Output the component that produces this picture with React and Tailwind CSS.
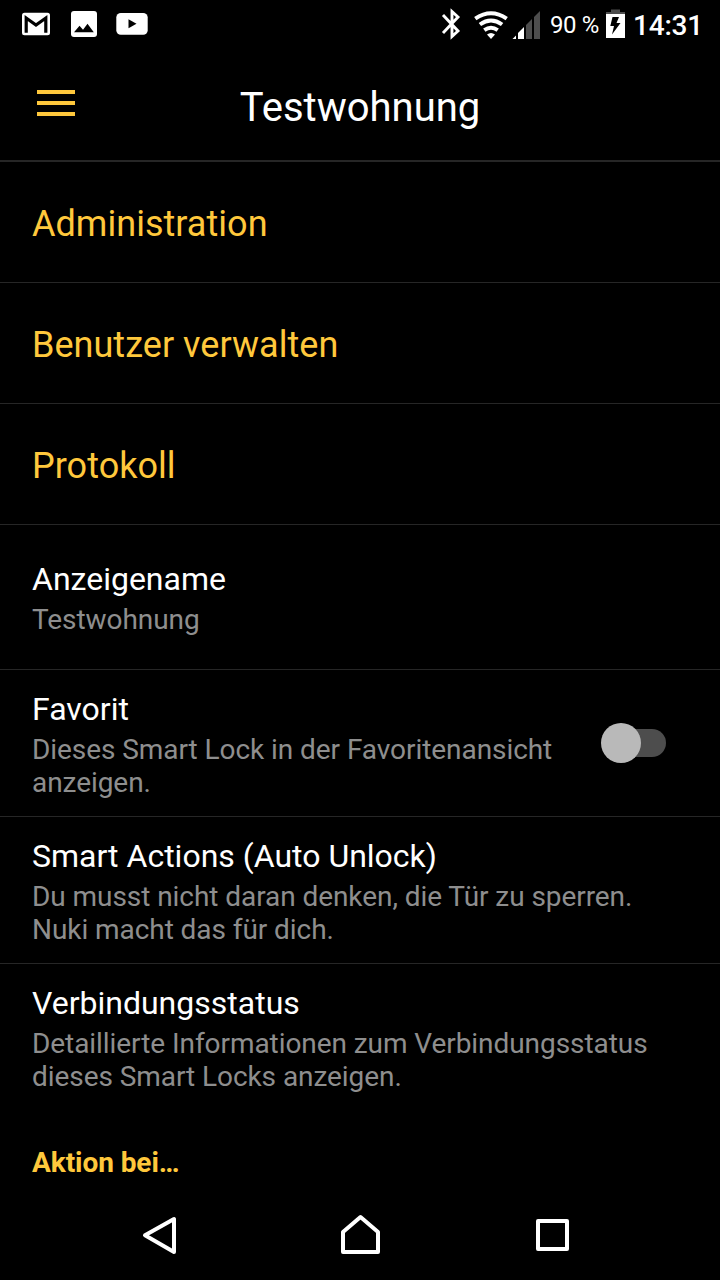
import React, { useState } from "react";

const links = ["Administration", "Benutzer verwalten", "Protokoll"];

function StatusBar() {
  return (
    <div className="h-12 shrink-0 flex items-center justify-between pl-[22px] pr-[17px]">
      <svg width="126" height="48" viewBox="22 0 126 48">
        {/* Mail */}
        <rect x="22" y="12.7" width="28" height="22.6" rx="2.5" fill="#fff" />
        <path d="M26.2 32.7V18L36 25L45.8 18V32.7" fill="none" stroke="#000" strokeWidth="3.2" />
        {/* Gallery */}
        <rect x="71" y="11" width="26" height="26" rx="3" fill="#fff" />
        <path d="M74 32.3L79.5 25.7L83 29.7L87.5 23.7L93.8 32.3Z" fill="#000" />
        {/* Video */}
        <rect x="116.3" y="13" width="31.4" height="21.7" rx="4.5" fill="#fff" />
        <path d="M128.5 19.3V28.2L136.5 23.7Z" fill="#000" />
      </svg>

      <div className="flex items-center h-12">
        <svg width="100" height="48" viewBox="441 0 100 48">
          {/* Bluetooth */}
          <path
            d="M443 15L458 31L452 36.5V11.5L458 17L443 33"
            fill="none"
            stroke="#fff"
            strokeWidth="2.9"
          />
          {/* Wifi */}
          <g fill="none" stroke="#fff" strokeWidth="4">
            <path d="M475.3 18.6Q491 7.8 506.7 18.6" />
            <path d="M479.9 24.5Q491 16.5 502.1 24.5" />
            <path d="M484.3 30.2Q491 25.4 497.7 30.2" />
          </g>
          <path d="M487 34.6Q491 31.4 495 34.6L491 39Z" fill="#fff" />
          {/* Signal */}
          <path d="M512.5 39L516 35.5V39Z" fill="#fff" />
          <path d="M518 39V33L524 27V39Z" fill="#fff" />
          <path d="M526 39V25L532 19V39Z" fill="#4d4d4d" />
          <path d="M534 39V17L540 11V39Z" fill="#4d4d4d" />
        </svg>
        <span className="w-[49px] ml-[9px] pt-0.5 text-2xl tracking-[-0.4px] whitespace-nowrap">90 %</span>
        <svg className="ml-[7px]" width="19" height="48" viewBox="606 0 19 48">
          <path d="M606 14V12H611V9.5H620V12H625V14Z" fill="#4d4d4d" />
          <rect x="606" y="14" width="19" height="24" fill="#fff" />
          <path d="M612.5 17H619L616.5 23H620.5L612 34.5L614 26H610.3Z" fill="#000" />
        </svg>
        <span className="w-[70px] ml-2 pt-[3px] text-[28px] font-medium tracking-[-0.2px] whitespace-nowrap">14:31</span>
      </div>
    </div>
  );
}

function Row({ title, lines, className, children }) {
  return (
    <div className={`flex justify-between border-b border-[#262626] pl-8 ${className}`}>
      <div>
        <div className="text-[32px] leading-[38px]">{title}</div>
        <div className="mt-[5px] text-[28px] leading-[33px] tracking-[-0.065px] text-[#8e8e8e]">
          {lines.map((line) => (
            <div key={line} className="whitespace-nowrap">
              {line}
            </div>
          ))}
        </div>
      </div>
      {children}
    </div>
  );
}

export default function App() {
  const [favorite, setFavorite] = useState(false);

  return (
    <div className="w-[720px] h-[1280px] flex flex-col bg-black text-white overflow-hidden font-[Roboto,sans-serif]">
      <StatusBar />

      <header className="h-[114px] shrink-0 grid grid-cols-[1fr_auto_1fr] items-center border-b-2 border-[#262626]">
        <button className="w-[38px] ml-[37px] -mt-[2px] flex flex-col gap-[7px]">
          <span className="h-1 w-full bg-[#ffc83c]"></span>
          <span className="h-1 w-full bg-[#ffc83c]"></span>
          <span className="h-1 w-full bg-[#ffc83c]"></span>
        </button>
        <h1 className="text-[40px] leading-[48px] mt-[7px]">Testwohnung</h1>
      </header>

      <main className="flex-1">
        {links.map((label) => (
          <div
            key={label}
            className="h-[121px] flex items-center border-b border-[#262626] pl-8 pt-1 text-4xl tracking-[0.03px] text-[#ffc83c]"
          >
            {label}
          </div>
        ))}

        <Row className="h-[145px] pt-[35px]" title="Anzeigename" lines={["Testwohnung"]} />
        <Row
          className="h-[147px] pt-5"
          title="Favorit"
          lines={["Dieses Smart Lock in der Favoritenansicht", "anzeigen."]}
        >
          <button
            onClick={() => setFavorite(!favorite)}
            className={`w-[65px] h-10 mt-[33px] mr-[54px] flex items-center ${
              favorite ? "flex-row-reverse" : ""
            }`}
          >
            <span className="size-10 shrink-0 relative z-10 rounded-full bg-[#b9b9b9]"></span>
            <span className="h-7 w-[45px] -mx-5 shrink-0 rounded-full bg-[#4d4d4d]"></span>
          </button>
        </Row>
        <Row
          className="h-[147px] pt-5"
          title="Smart Actions (Auto Unlock)"
          lines={["Du musst nicht daran denken, die Tür zu sperren.", "Nuki macht das für dich."]}
        />
        <Row
          className="h-[147px] pt-5 border-b-transparent"
          title="Verbindungsstatus"
          lines={["Detaillierte Informationen zum Verbindungsstatus", "dieses Smart Locks anzeigen."]}
        />
        <h2 className="pl-8 pt-[35px] text-[28px] leading-[33px] font-bold tracking-[-0.065px] text-[#ffc83c]">
          Aktion bei…
        </h2>
      </main>

      <nav className="h-[90px] shrink-0 flex items-center">
        <svg width="720" height="90" viewBox="0 1190 720 90" fill="none" stroke="#fff" strokeWidth="4" strokeLinejoin="round">
          <path d="M174 1219V1252L145 1235.3Z" />
          <path d="M343 1252V1232L360.5 1217L378 1232V1252Z" />
          <path d="M538 1221H567V1249H538Z" />
        </svg>
      </nav>
    </div>
  );
}
